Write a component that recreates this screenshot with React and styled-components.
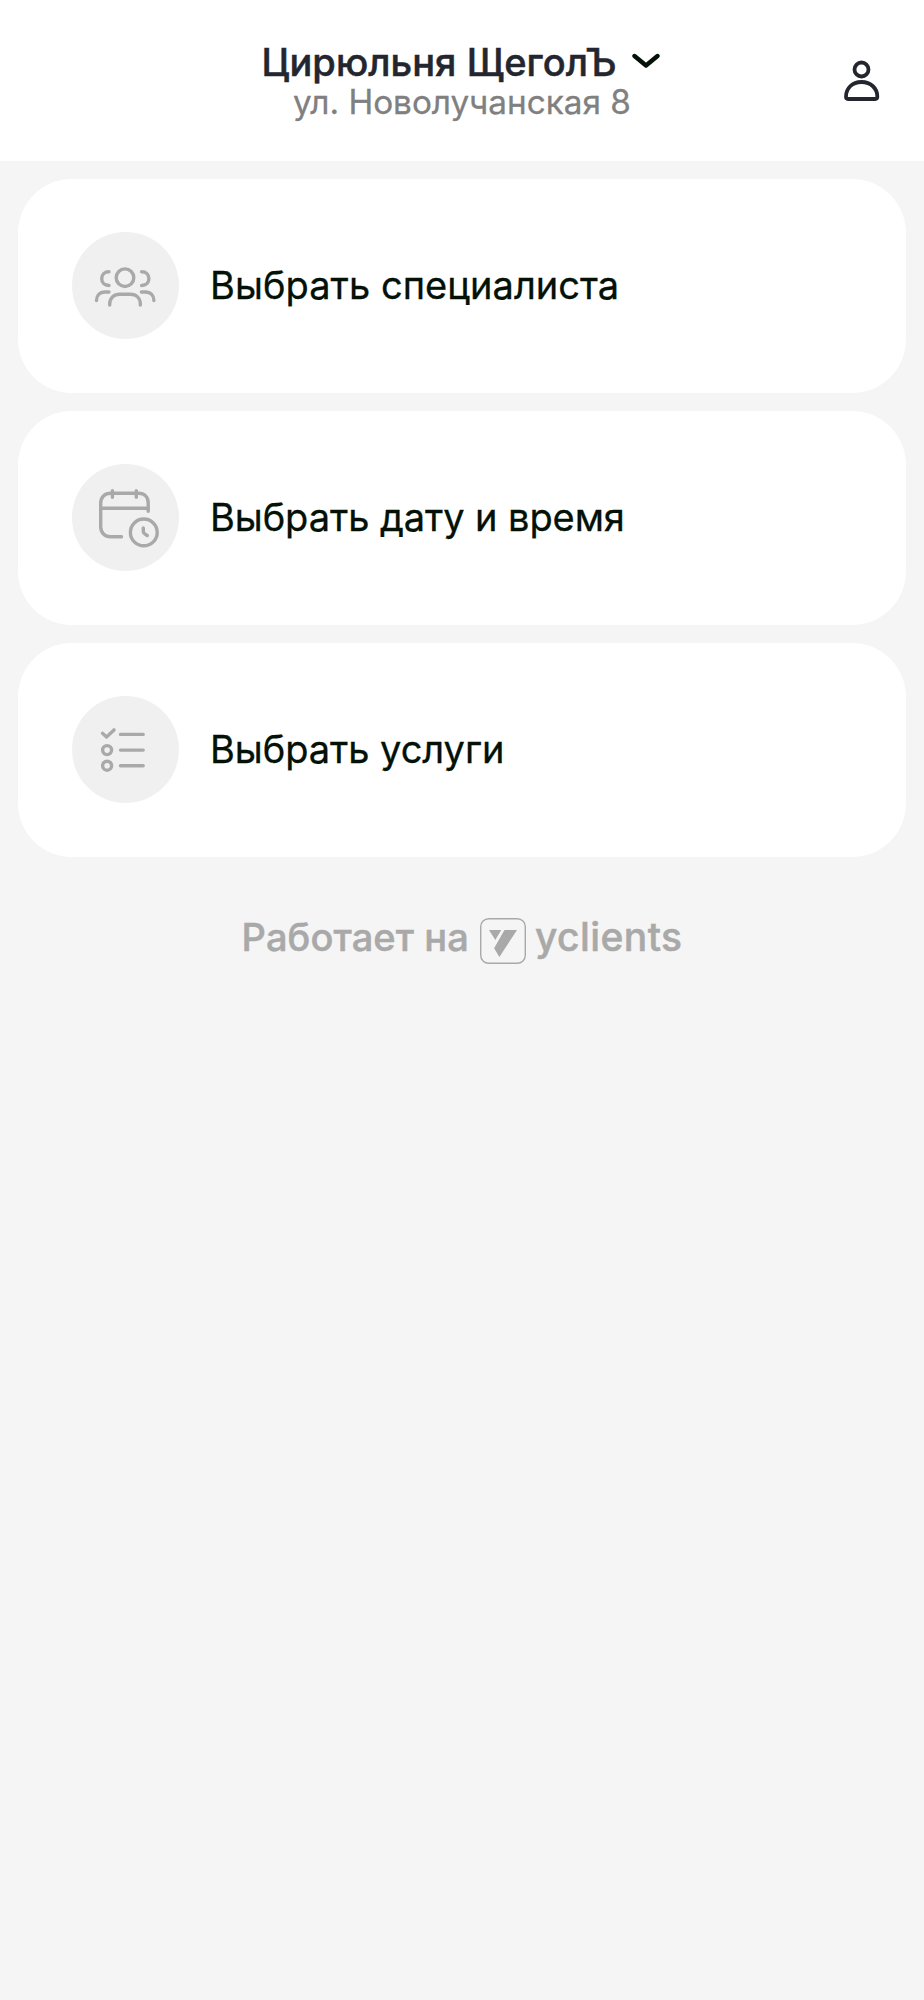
import React from "react";
import styled, { createGlobalStyle } from "styled-components";

const GlobalStyle = createGlobalStyle`
  * {
    box-sizing: border-box;
  }

  body {
    margin: 0;
    background: #f5f5f5;
    font-family: Inter, "Liberation Sans", sans-serif;
  }
`;

const Page = styled.div`
  min-height: 2000px;
  background: #f5f5f5;
`;

const Header = styled.header`
  display: grid;
  grid-template-columns: 80px 1fr 80px;
  height: 161px;
  background: #fff;
`;

const Salon = styled.div`
  grid-column: 2;
  display: flex;
  flex-direction: column;
  align-items: center;
  padding-top: 42px;
`;

const SalonName = styled.button`
  display: flex;
  align-items: center;
  gap: 15px;
  height: 40px;
  margin: 0;
  padding: 0 3px 0 0;
  border: 0;
  background: none;
  color: #24262f;
  font: 500 38px/40px Inter, sans-serif;
  letter-spacing: 0.04px;
  white-space: nowrap;
  -webkit-text-stroke: 0.5px;

  svg {
    margin-bottom: 3px;
    color: #031106;
  }
`;

const Address = styled.div`
  color: #808080;
  font-size: 33.3px;
  line-height: 40px;
  white-space: nowrap;
  -webkit-text-stroke: 0.3px;
`;

const ProfileButton = styled.button`
  display: flex;
  align-items: center;
  justify-content: flex-start;
  padding: 0;
  border: 0;
  background: none;
  color: #24262f;
`;

const Menu = styled.main`
  display: flex;
  flex-direction: column;
  gap: 17.5px;
  padding: 17.5px 18px 0;
`;

const Card = styled.button`
  display: flex;
  align-items: center;
  gap: 31.3px;
  height: 214.5px;
  padding: 0 53.7px 1px;
  border: 0;
  border-radius: 54px;
  background: #fff;
  color: #031106;
  font: 400 38px/46px Inter, sans-serif;
  letter-spacing: ${(props) => props.$spacing || "0"};
  text-align: left;
  -webkit-text-stroke: 0.3px;
`;

const IconCircle = styled.span`
  display: flex;
  width: 107px;
  height: 107px;
  border-radius: 50%;
  background: #f0f0f0;
  color: #a9a9a9;
`;

const Footer = styled.footer`
  display: flex;
  align-items: center;
  justify-content: center;
  height: 46px;
  margin-top: 60.5px;
  color: #a9a9a9;
  -webkit-text-stroke: 0.5px;
`;

const PoweredBy = styled.span`
  margin-right: 11px;
  padding-bottom: 7px;
  font-size: 38px;
  font-weight: 500;
  letter-spacing: 0.1px;
  line-height: 46px;
  white-space: nowrap;
`;

const Brand = styled.span`
  margin-left: 9px;
  padding-bottom: 7px;
  font-size: 39px;
  font-weight: 500;
  letter-spacing: 0.4px;
  line-height: 46px;
`;

const Drawing = ({ width, height, stroke = 3.4, children }) => (
  <svg
    width={width}
    height={height}
    viewBox={`0 0 ${width} ${height}`}
    fill="none"
    stroke="currentColor"
    strokeWidth={stroke}
    strokeLinecap="round"
    strokeLinejoin="round"
  >
    {children}
  </svg>
);

const PeopleIcon = () => (
  <Drawing width={107} height={107}>
    <circle cx="53" cy="45.7" r="8.8" />
    <path d="M37.7 73v-1c0-6 4-9.7 10-9.7h10.6c6 0 10 3.7 10 9.7v1" />
    <path d="M37 39.7c-4.5 0-7.3 3-7.3 6.9s2.8 6.9 7.3 6.9" />
    <path d="M69.6 39.7c4.5 0 7.3 3 7.3 6.9s-2.8 6.9-7.3 6.9" />
    <path d="M24.5 68.5c0-5 3.2-8.5 8.5-8.5h4" />
    <path d="M81.9 68.5c0-5-3.2-8.5-8.5-8.5h-4" />
  </Drawing>
);

const CalendarIcon = () => (
  <Drawing width={107} height={107}>
    <path d="M49.5 72.7H38.7c-6 0-10-4-10-10V39.3c0-6 4-10 10-10H66.5c6 0 9.7 4 9.7 9.5v8.5" />
    <path d="M28.7 44.3h47.5M40.4 26.8v6.4M64.3 26.8v6.4" />
    <circle cx="71.8" cy="68.4" r="13.4" />
    <path d="M71.3 64v3.6c0 2 2 2.6 4 3.9" />
  </Drawing>
);

const ListIcon = () => (
  <Drawing width={107} height={107}>
    <path d="M30.5 37.3l4 3.6 7.5-7" />
    <circle cx="35.1" cy="54.1" r="4.5" />
    <circle cx="35.1" cy="69.7" r="4.5" />
    <path d="M48.5 38.4h22.7M48.5 54.1h22.7M48.5 69.7h22.7" />
  </Drawing>
);

const YclientsMark = () => (
  <svg width="46" height="46" viewBox="0 0 46 46" fill="none">
    <rect x=".7" y=".7" width="44.6" height="44.6" rx="8" stroke="currentColor" strokeWidth="1.4" />
    <path d="M9 12h12.3l-6 10zM24.5 12h12.5L19.4 39l-5.3-8.8z" fill="currentColor" />
  </svg>
);

const steps = [
  { title: "Выбрать специалиста", icon: <PeopleIcon />, spacing: "0.05px" },
  { title: "Выбрать дату и время", icon: <CalendarIcon />, spacing: "-0.08px" },
  { title: "Выбрать услуги", icon: <ListIcon />, spacing: "-0.05px" },
];

function App() {
  return (
    <Page>
      <GlobalStyle />
      <Header>
        <Salon>
          <SalonName>
            Цирюльня ЩеголЪ
            <Drawing width={28} height={16} stroke={4.4}>
              <path d="M2.5 3l11.5 9.5L25.5 3" />
            </Drawing>
          </SalonName>
          <Address>ул. Новолучанская 8</Address>
        </Salon>
        <ProfileButton aria-label="Профиль">
          <Drawing width={36} height={42} stroke={3.8}>
            <circle cx="17.5" cy="9.5" r="7" />
            <path d="M2 36.5c0-8 6-14.5 15.5-14.5s15.8 6.5 15.8 14.5c0 1.5-.8 2.5-2 2.5H4c-1.2 0-2-1-2-2.5z" />
          </Drawing>
        </ProfileButton>
      </Header>

      <Menu>
        {steps.map((step) => (
          <Card key={step.title} $spacing={step.spacing}>
            <IconCircle>{step.icon}</IconCircle>
            {step.title}
          </Card>
        ))}
      </Menu>

      <Footer>
        <PoweredBy>Работает на</PoweredBy>
        <YclientsMark />
        <Brand>yclients</Brand>
      </Footer>
    </Page>
  );
}

export default App;
